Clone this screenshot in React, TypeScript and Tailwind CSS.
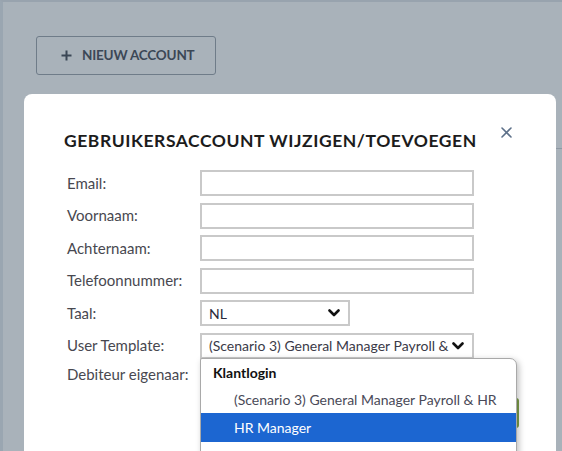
import React from "react";

const font = { fontFamily: "Lato, 'Noto Sans', sans-serif" };

const Chevron: React.FC = () => (
  <svg width="12" height="8" viewBox="0 0 12 8" className="shrink-0">
    <path d="M1.5 1.5 L6 6 L10.5 1.5" fill="none" stroke="#111" strokeWidth="2.6" strokeLinecap="round" strokeLinejoin="round" />
  </svg>
);

const fields = ["Email:", "Voornaam:", "Achternaam:", "Telefoonnummer:"];

const App: React.FC = () => {
  return (
    <div
      className="relative w-[562px] h-[451px] overflow-hidden bg-[#a9b2ba] border-l-[3px] border-t-2 border-l-[#9aa6b1] border-t-[#98a3ae]"
      style={font}
    >
      {/* Page behind the overlay */}
      <div className="pt-[34px] pl-[33px]">
        <button className="flex items-center h-[39px] w-[180px] border border-[#6f7c89] rounded-[3px] pl-[24px] text-[#3b4756]">
          <svg width="11" height="11" viewBox="0 0 11 11">
            <path d="M5.5 0.5 V10.5 M0.5 5.5 H10.5" stroke="#3b4756" strokeWidth="2" />
          </svg>
          <span className="ml-[10px] text-[13.5px] font-bold tracking-[-0.2px]">NIEUW ACCOUNT</span>
        </button>
      </div>
      <div className="absolute right-0 top-[146px] w-[8px] h-px bg-[#8e99a4]" />

      {/* Modal */}
      <div className="absolute left-[21px] top-[92px] w-[532px] h-[400px] bg-white rounded-[8px]">
        <div className="flex items-start justify-between pl-[40px] pr-[44px] pt-[36px]">
          <h2 className="text-[17.5px] font-bold text-[#1c1c1c] tracking-[0.55px] leading-[22px]">
            GEBRUIKERSACCOUNT WIJZIGEN/TOEVOEGEN
          </h2>
          <svg width="11" height="11" viewBox="0 0 11 11" className="mt-[-3px]">
            <path d="M1 1 L10 10 M10 1 L1 10" stroke="#5d7089" strokeWidth="1.6" strokeLinecap="round" />
          </svg>
        </div>

        <div className="pl-[43px] pt-[18px] flex flex-col gap-[6.5px] text-[15px] text-[#484850]">
          {fields.map((f) => (
            <div key={f} className="flex items-center">
              <span className="w-[133px]">{f}</span>
              <div className="w-[274px] h-[26px] border-2 border-[#c9c9c9]" />
            </div>
          ))}
          <div className="flex items-center">
            <span className="w-[133px]">Taal:</span>
            <div className="w-[150px] h-[26px] border-2 border-[#c9c9c9] flex items-center justify-between pl-[7px] pr-[8px] text-[14px] text-[#2a2a3a]">
              <span>NL</span>
              <Chevron />
            </div>
          </div>
          <div className="flex items-center">
            <span className="w-[133px]">User Template:</span>
            <div className="w-[274px] h-[26px] border-2 border-[#c9c9c9] flex items-center justify-between pl-[7px] pr-[8px] text-[14px] text-[#3a3a48]">
              <span className="whitespace-nowrap overflow-hidden">(Scenario 3) General Manager Payroll &amp;</span>
              <Chevron />
            </div>
          </div>
          <div className="flex items-center mt-[-4px]">
            <span className="w-[133px]">Debiteur eigenaar:</span>
            <div className="w-[274px] h-[26px] border-2 border-[#c9c9c9]" />
          </div>
        </div>

        {/* Save button peeking out from behind the open list */}
        <div className="absolute left-[450px] top-[304px] w-[45px] h-[30px] bg-[#7fa04a] rounded-[3px]" />

        {/* Open option list of the User Template select */}
        <div className="absolute left-[176px] top-[264px] w-[317px] h-[120px] bg-white border border-[#a9a9a9] rounded-tr-[7px] rounded-tl-[2px] shadow-[2px_2px_6px_rgba(0,0,0,0.25)] text-[14px] overflow-hidden">
          <div className="h-[26px] pt-[3px] pl-[12px] font-bold text-[#111]">Klantlogin</div>
          <div className="h-[28px] flex items-center pl-[33px] text-[#4a4a58]">
            (Scenario 3) General Manager Payroll &amp; HR
          </div>
          <div className="h-[29px] flex items-center pl-[33px] bg-[#1c66d1] text-white">HR Manager</div>
        </div>
      </div>
    </div>
  );
};

export default App;
